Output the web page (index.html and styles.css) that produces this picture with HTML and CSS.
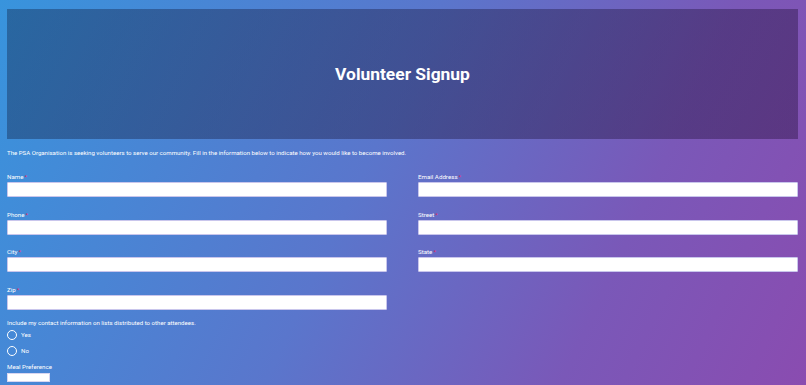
FILE: index.html
```html
<!DOCTYPE html>
<html lang="en">
	<head>
		<meta charset="UTF-8">
		<meta name="viewport" content="width=device-width, initial-scale=1.0">
		<title>Volunteer Signup</title>
		<link rel="stylesheet" href="styles.css">
	</head>
	<body>
		<!-- header banner -->
		<div class="banner">
			<h1>Volunteer Signup</h1>
		</div>

		<p class="intro">The PSA Organisation is seeking volunteers to serve our community. Fill in the information below to indicate how you would like to become involved.</p>

		<form class="signup">
			<div class="grid">
				<div class="field">
					<label>Name<span class="req">*</span></label>
					<input type="text">
				</div>
				<div class="field">
					<label>Email Address<span class="req">*</span></label>
					<input type="text">
				</div>
				<div class="field">
					<label>Phone<span class="req">*</span></label>
					<input type="text">
				</div>
				<div class="field">
					<label>Street<span class="req">*</span></label>
					<input type="text">
				</div>
				<div class="field">
					<label>City<span class="req">*</span></label>
					<input type="text">
				</div>
				<div class="field">
					<label>State<span class="req">*</span></label>
					<input type="text">
				</div>
				<div class="field">
					<label>Zip<span class="req">*</span></label>
					<input type="text">
				</div>
			</div>

			<p class="question">Include my contact information on lists distributed to other attendees.</p>
			<div class="radios">
				<div class="radio-row"><span class="circle"></span>Yes</div>
				<div class="radio-row"><span class="circle"></span>No</div>
			</div>

			<div class="meal">
				<label>Meal Preference</label>
				<div class="select"></div>
			</div>
		</form>
	</body>
</html>
```
FILE: styles.css
```css
html, body {
	height: 100%;
}

body {
	margin: 0;
	padding: 9px 8px 0 7px;
	box-sizing: border-box;
	font-family: Roboto, "Liberation Sans", Arial, sans-serif;
	color: #fff;
	background: linear-gradient(115deg, #3894dd 0%, #5a76cc 45%, #7a58b8 75%, #8a4cb0 100%);
	overflow: hidden;
}

.banner {
	height: 130px;
	background: linear-gradient(115deg, rgba(10, 20, 50, 0.35), rgba(30, 10, 50, 0.38));
	display: flex;
	align-items: center;
	justify-content: center;
}

.banner h1 {
	margin: 0;
	font-size: 17.4px;
	font-weight: bold;
	color: #fff;
}

.intro {
	margin: 9px 0 0 0;
	font-size: 6.1px;
	line-height: 10px;
}

.signup {
	margin-top: 15px;
}

.grid {
	display: grid;
	grid-template-columns: 380px 380px;
	column-gap: 31px;
	row-gap: 13.5px;
}

.field label,
.meal label {
	display: block;
	font-size: 6.2px;
	line-height: 8px;
	margin-bottom: 1px;
}

.req {
	color: #e0245e;
	margin-left: 1px;
}

.field input {
	display: block;
	width: 100%;
	height: 15px;
	box-sizing: border-box;
	margin: 0;
	border: 1px solid #c9c6ec;
	border-radius: 1px;
	background: #fff;
}

.question {
	margin: 8px 0 0 0;
	font-size: 6.1px;
	line-height: 10px;
}

.radios {
	display: flex;
	flex-direction: column;
	gap: 4px;
	margin-top: 1px;
}

.radio-row {
	display: flex;
	align-items: center;
	height: 12px;
	font-size: 6.2px;
}

.circle {
	width: 8px;
	height: 8px;
	border: 1px solid #fff;
	border-radius: 50%;
	margin-right: 4px;
}

.meal {
	margin-top: 6px;
}

.meal label {
	margin-bottom: 2px;
}

.select {
	width: 43px;
	height: 9px;
	background: #fff;
	border: 1px solid #d8d6f0;
	box-sizing: border-box;
}
```
